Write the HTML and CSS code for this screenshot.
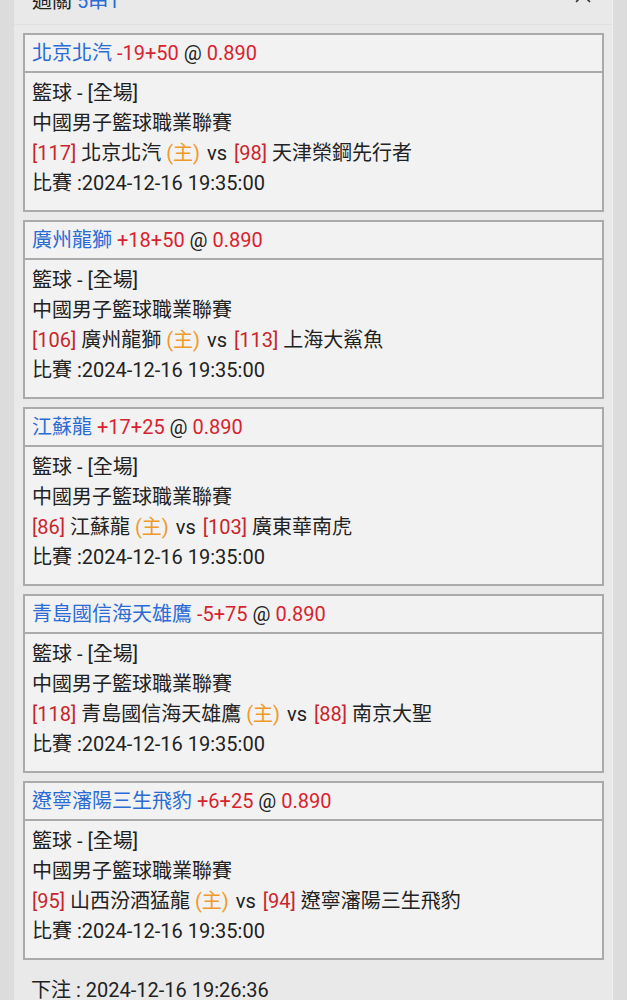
FILE: index.html
```html
<!DOCTYPE html>
<html lang="zh-Hant">
<head>
<meta charset="utf-8">
<title>過關 5串1</title>
<link rel="stylesheet" href="styles.css">
</head>
<body>
<div class="page">
  <div class="panel">
    <div class="panel-head">
      <div class="title">過關 <span class="blue">5串1</span></div>
      <svg class="chev" width="18" height="12" viewBox="0 0 18 12"><polyline points="2,10 9,3 16,10" fill="none" stroke="#333" stroke-width="1.6"/></svg>
    </div>
    <div class="cards">
      <div class="card">
        <div class="card-head"><span class="blue">北京北汽</span> <span class="red">-19+50</span> @ <span class="red">0.890</span></div>
        <div class="card-body">
          <div>籃球 - [全場]</div>
          <div>中國男子籃球職業聯賽</div>
          <div class="match"><span class="num">[117]</span> 北京北汽 <span class="home">(主)</span> <span class="vs">vs</span> <span class="num">[98]</span> 天津榮鋼先行者</div>
          <div>比賽 :2024-12-16 19:35:00</div>
        </div>
      </div>
      <div class="card">
        <div class="card-head"><span class="blue">廣州龍獅</span> <span class="red">+18+50</span> @ <span class="red">0.890</span></div>
        <div class="card-body">
          <div>籃球 - [全場]</div>
          <div>中國男子籃球職業聯賽</div>
          <div class="match"><span class="num">[106]</span> 廣州龍獅 <span class="home">(主)</span> <span class="vs">vs</span> <span class="num">[113]</span> 上海大鯊魚</div>
          <div>比賽 :2024-12-16 19:35:00</div>
        </div>
      </div>
      <div class="card">
        <div class="card-head"><span class="blue">江蘇龍</span> <span class="red">+17+25</span> @ <span class="red">0.890</span></div>
        <div class="card-body">
          <div>籃球 - [全場]</div>
          <div>中國男子籃球職業聯賽</div>
          <div class="match"><span class="num">[86]</span> 江蘇龍 <span class="home">(主)</span> <span class="vs">vs</span> <span class="num">[103]</span> 廣東華南虎</div>
          <div>比賽 :2024-12-16 19:35:00</div>
        </div>
      </div>
      <div class="card">
        <div class="card-head"><span class="blue">青島國信海天雄鷹</span> <span class="red">-5+75</span> @ <span class="red">0.890</span></div>
        <div class="card-body">
          <div>籃球 - [全場]</div>
          <div>中國男子籃球職業聯賽</div>
          <div class="match"><span class="num">[118]</span> 青島國信海天雄鷹 <span class="home">(主)</span> <span class="vs">vs</span> <span class="num">[88]</span> 南京大聖</div>
          <div>比賽 :2024-12-16 19:35:00</div>
        </div>
      </div>
      <div class="card">
        <div class="card-head"><span class="blue">遼寧瀋陽三生飛豹</span> <span class="red">+6+25</span> @ <span class="red">0.890</span></div>
        <div class="card-body">
          <div>籃球 - [全場]</div>
          <div>中國男子籃球職業聯賽</div>
          <div class="match"><span class="num">[95]</span> 山西汾酒猛龍 <span class="home">(主)</span> <span class="vs">vs</span> <span class="num">[94]</span> 遼寧瀋陽三生飛豹</div>
          <div>比賽 :2024-12-16 19:35:00</div>
        </div>
      </div>
    </div>
    <div class="footer">下注 : 2024-12-16 19:26:36</div>
  </div>
</div>
</body>
</html>
```
FILE: styles.css
```css
html, body {
  margin: 0;
  padding: 0;
  background: #dcdcdc;
}
body {
  font-family: Roboto, "Noto Sans CJK TC", "Noto Sans", sans-serif;
  font-size: 20px;
  line-height: 30px;
  color: #222;
  overflow: hidden;
}
.page {
  padding: 0 14px 0 14px;
}
.panel {
  background: #e9e9e9;
  margin-top: -23px;
  min-height: 1100px;
  border-right: 1px solid #efefef;
}
.panel-head {
  height: 47px;
  padding: 0 20px 0 18px;
  display: flex;
  align-items: center;
  justify-content: space-between;
  border-bottom: 1px solid #e0e0e0;
}
.title {
  line-height: 30px;
}
.chev {
  display: block;
  margin-top: -6px;
}
.cards {
  display: flex;
  flex-direction: column;
  gap: 8px;
  padding: 8px 8px 0 9px;
}
.card {
  background: #f2f2f2;
  border: 2px solid #aaaaaa;
}
.card-head {
  padding: 3px 7px;
  border-bottom: 2px solid #aaaaaa;
}
.card-body {
  padding: 5px 7px 12px 7px;
}
.vs {
  margin: 0 2px;
}
.blue { color: #2a6cd4; }
.red { color: #d8232e; }
.num { color: #c8262c; }
.home { color: #ee9a2a; }
.footer {
  padding: 15px 17px 7px 17px;
}
```
